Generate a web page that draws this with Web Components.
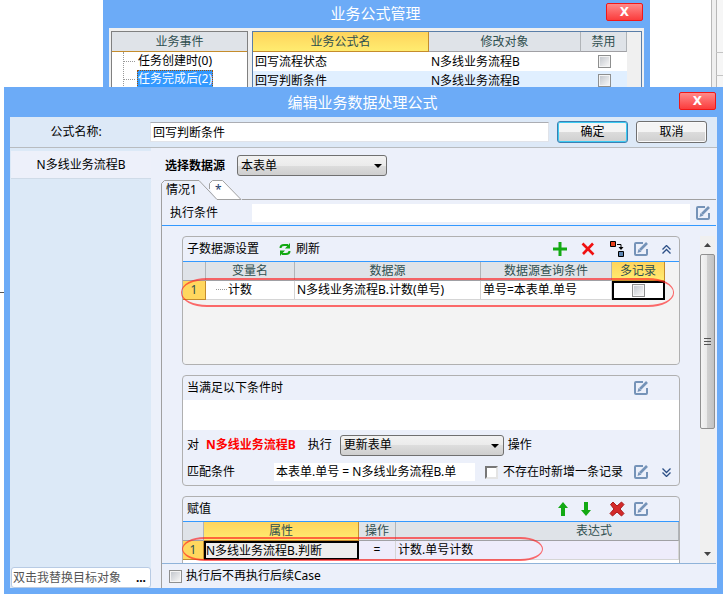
<!DOCTYPE html>
<html lang="zh-CN">
<head>
<meta charset="utf-8">
<title>编辑业务数据处理公式</title>
<style>
  html, body { height: 100%; }
  body {
    margin: 0;
    background: #fff;
    color: #000;
    font: 12px/18px "Noto Sans", "Noto Sans CJK SC", sans-serif;
    overflow: hidden;
  }
</style>
</head>
<body>
<desk-top></desk-top>
<script>
const BASE = `
<style>
  * { box-sizing: border-box; }
  :host([hidden]) { display: none; }
  button, input, select { font: inherit; color: inherit; margin: 0; }
  button { cursor: pointer; }
  .icon {
    display: inline-flex;
    border: 0;
    padding: 0;
    background: none;
    color: #7593b8;
  }
  .push {
    width: 71px;
    height: 22px;
    padding: 0;
    border: 1px solid #707070;
    border-radius: 3px;
    background: linear-gradient(#f4f4f4 50%, #dcdcdc 50%, #cfcfcf);
    box-shadow: inset 0 0 0 1px #fafafa;
  }
  .push.default { border-color: #3c7fb1; box-shadow: inset 0 0 0 1px #3ccbf2; }
  .check {
    appearance: none;
    flex: none;
    display: block;
    width: 13px;
    height: 13px;
    border: 1px solid #8e8f8f;
    background: linear-gradient(135deg, #c4c8ce, #f6f6f6) center / 9px 9px no-repeat #f4f4f4;
  }
  .check.flat { background: #fff; border: 2px solid; border-color: #777 #e4e4e4 #e4e4e4 #777; }
  .select { position: relative; display: block; height: 21px; }
  .select select {
    appearance: none;
    display: block;
    width: 100%;
    height: 100%;
    padding: 0 20px 0 3px;
    border: 1px solid #707070;
    border-radius: 3px;
    background: linear-gradient(#f2f2f2, #ebebeb 50%, #dddddd 50%, #cfcfcf);
    line-height: 18px;
  }
  .select::after {
    content: "";
    position: absolute;
    right: 5px;
    top: 9px;
    border: 4px solid transparent;
    border-top-color: #000;
    border-bottom: 0;
    pointer-events: none;
  }
  table { border-collapse: separate; border-spacing: 0; table-layout: fixed; width: 100%; }
  th, td { height: 19px; padding: 0 2px; line-height: 18px; white-space: nowrap; overflow: hidden; }
  th {
    background: #dfe3e8;
    border-right: 1px solid #b0b4b8;
    border-bottom: 1px solid #a0a0a4;
    color: #2f4f4f;
    font-weight: normal;
  }
  th.on {
    background: linear-gradient(#ffd45c, #ffec70);
    border-right-color: #c58c2c;
    border-bottom-color: #c58c2c;
  }
  td { background: #fff; border-right: 1px solid #d5d5d5; border-bottom: 1px solid #d5d5d5; text-align: left; }
  td .check { margin: 0 auto; }
</style>
`

const ICONS = {
  edit: '<svg width="16" height="16" viewBox="0 0 16 16" fill="none" stroke="currentColor" stroke-width="2"><path d="M10 2H3Q2 2 2 3V13Q2 14 3 14H13Q14 14 14 13V8"/><path d="M7 9L14 2" stroke-width="2.600"/><path d="M4.500 12L5.500 8L8.500 10.500Z" fill="currentColor" stroke="none"/></svg>',
  plus: '<svg width="14" height="14" viewBox="0 0 14 14"><path d="M5.500 0h3v5.500H14v3H8.500V14h-3V8.500H0v-3h5.500z" fill="#13a913"/></svg>',
  cross: '<svg width="14" height="14" viewBox="0 0 14 14" stroke="#f01010" stroke-width="2.600"><path d="M1.500 1.500L12.500 12.500M12 1.500L2 12"/></svg>',
  remove: '<svg width="16" height="16" viewBox="0 0 16 16"><path d="M1.500 3.500L4 1L8 5L12.500 1L15 3.500L11 8L15 12.500L12.500 15L8 11L3.500 15L1 12.500L5 8Z" fill="#d42a2a" stroke="#a81c1c"/></svg>',
  link: '<svg width="16" height="16" viewBox="0 0 16 16"><path d="M1.500 .5h5v5h-5z" fill="#e8401c" stroke="#000"/><path d="M9.500 10.500h5v5h-5z" fill="#5c84b0" stroke="#000"/><path d="M8 3.500h4v4" fill="none" stroke="#000"/><path d="M9.500 6h5L12 9z"/></svg>',
  up: '<svg width="10" height="14" viewBox="0 0 10 14"><path d="M5 0L10 6H7V14H3V6H0z" fill="#13a913"/></svg>',
  down: '<svg width="10" height="14" viewBox="0 0 10 14"><path d="M5 14L10 8H7V0H3V8H0z" fill="#13a913"/></svg>',
  fold: '<svg width="9" height="9" viewBox="0 0 9 9" fill="none" stroke="#2c4f86" stroke-width="1.300"><path d="M.5 4.500l4-4l4 4M.5 8.500l4-4l4 4"/></svg>',
  unfold: '<svg width="9" height="9" viewBox="0 0 9 9" fill="none" stroke="#2c4f86" stroke-width="1.300"><path d="M.5 .5l4 4l4-4M.5 4.500l4 4l4-4"/></svg>',
  refresh: '<svg width="12" height="13" viewBox="0 0 12 13"><g fill="none" stroke="#13a913" stroke-width="2"><path d="M1.500 5Q1.500 2 5 2H9"/><path d="M10.500 8Q10.500 11 7 11H3"/></g><path d="M11 0V5.500H6zM1 13V7.500H6z" fill="#13a913"/></svg>',
}

class DeskTop extends HTMLElement {
  constructor() {
    super()
    this.attachShadow({ mode: 'open' }).innerHTML = `
      <style>
        :host { display: block; position: relative; height: 100%; }
        /* edges of the form that lies under both windows */
        .form {
          position: absolute;
          top: 0; right: 0; bottom: 0;
          width: 11px;
          border-left: 1px solid #b8b8b8;
          background: linear-gradient(#c4c4c4, #c4c4c4) 4px 52px / 7px 1px no-repeat,
            linear-gradient(#c4c4c4, #c4c4c4) 4px 75px / 7px 1px no-repeat,
            linear-gradient(90deg, #efefef 4px, #b8b8b8 4px 5px, #f6f6f6 5px);
        }
        .rule { position: absolute; left: 0; top: 292px; width: 4px; height: 1px; background: #555; }
        formula-manager { position: absolute; left: 103px; right: 73px; top: -2px; height: 110px; }
        formula-editor { position: absolute; left: 4px; right: 0; top: 87px; bottom: 0; }
      </style>
      <div class="form"></div>
      <div class="rule"></div>
      <formula-manager></formula-manager>
      <formula-editor></formula-editor>
    `
  }
}

class AppWindow extends HTMLElement {
  constructor() {
    super()
    this.attachShadow({ mode: 'open' }).innerHTML = `
      ${BASE}
      <style>
        :host {
          display: flex;
          flex-direction: column;
          height: 100%;
          padding: 0 6px 6px;
          background: #6cabf7;
        }
        header { flex: none; display: flex; align-items: flex-start; height: 30px; padding-right: 1px; }
        h1 {
          flex: 1;
          margin: 0;
          padding-left: 36px;
          color: #fff;
          font-size: 15px;
          font-weight: normal;
          line-height: 30px;
          text-align: center;
        }
        .close {
          width: 37px;
          height: 18px;
          margin-top: 5px;
          padding: 0;
          border: 1px solid #f01818;
          border-radius: 2px;
          background: linear-gradient(#ff8a8a, #fb3c3c);
          color: #fff;
          font: bold 12px/16px "DejaVu Sans", sans-serif;
        }
        main { flex: 1; min-height: 0; display: flex; flex-direction: column; }
      </style>
      <header><h1></h1><button class="close" type="button">X</button></header>
      <main><slot></slot></main>
    `
  }

  connectedCallback() {
    this.shadowRoot.querySelector('h1').textContent = this.getAttribute('caption')
  }
}

class FormulaManager extends HTMLElement {
  constructor() {
    super()
    this.attachShadow({ mode: 'open' }).innerHTML = `
      ${BASE}
      <style>
        :host { display: block; }
        .panes { flex: 1; display: flex; gap: 4px; padding: 3px 2px 0; background: #f0f0f0; }
        .events { width: 137px; border: 1px solid #808080; background: #fff; }
        .events h2 {
          margin: 0;
          height: 20px;
          border-bottom: 1px solid #c58c2c;
          background: #dfe3e8;
          color: #2f4f4f;
          font-size: 12px;
          font-weight: normal;
          line-height: 20px;
          text-align: center;
        }
        ul { margin: 0 0 0 11px; padding: 0; list-style: none; border-left: 1px dotted #999; }
        li { display: flex; align-items: center; height: 18px; }
        li::before { content: ""; width: 11px; margin-right: 2px; border-top: 1px dotted #999; }
        li span { padding: 0 1px; line-height: 18px; }
        li.on span { background: #3399ff; color: #fff; outline: 1px dotted #a05000; outline-offset: -1px; }
        .list { flex: 1; border: 1px solid #5a7ea8; padding-right: 14px; }
        th { height: 20px; }
        td { border: 0; }
        .alt td { background: #e0efff; }
      </style>
      <app-window caption="业务公式管理">
        <div class="panes">
          <div class="events">
            <h2>业务事件</h2>
            <ul>
              <li><span>任务创建时(0)</span></li>
              <li class="on"><span>任务完成后(2)</span></li>
            </ul>
          </div>
          <div class="list">
            <table>
              <colgroup><col><col style="width: 152px"><col style="width: 46px"></colgroup>
              <tr><th class="on">业务公式名</th><th>修改对象</th><th>禁用</th></tr>
              <tr><td>回写流程状态</td><td>N多线业务流程B</td><td><input class="check" type="checkbox" aria-label="禁用"></td></tr>
              <tr class="alt"><td>回写判断条件</td><td>N多线业务流程B</td><td><input class="check" type="checkbox" aria-label="禁用"></td></tr>
            </table>
          </div>
        </div>
      </app-window>
    `
  }
}

class GroupBox extends HTMLElement {
  constructor() {
    super()
    this.attachShadow({ mode: 'open' }).innerHTML = `
      <style>
        :host {
          display: block;
          flex: none;
          border: 1px solid #b0b0b0;
          border-radius: 4px;
          background: #ecf0fa;
        }
        header { display: flex; align-items: center; height: 24px; padding: 0 4px; }
        :host([ruled]) header { border-bottom: 1px solid #3399ff; }
        .tools { margin-left: auto; display: flex; align-items: center; }
      </style>
      <header><slot name="head"></slot><div class="tools"><slot name="tools"></slot></div></header>
      <slot></slot>
    `
  }
}

class ScrollBar extends HTMLElement {
  constructor() {
    super()
    this.attachShadow({ mode: 'open' }).innerHTML = `
      ${BASE}
      <style>
        :host { display: flex; flex-direction: column; width: 15px; background: #f0f0f0; }
        button { flex: none; height: 18px; padding: 0; border: 0; background: none; line-height: 0; }
        .track { flex: 1; }
        .thumb {
          display: flex;
          flex-direction: column;
          align-items: center;
          justify-content: center;
          gap: 2px;
          height: 60%;
          border: 1px solid #909090;
          border-radius: 2px;
          background: linear-gradient(90deg, #f4f4f4, #e8e8e8 50%, #d0d0d0 50%, #c2c2c2);
        }
        .thumb i { width: 7px; height: 1px; background: #555; }
      </style>
      <button type="button" aria-label="向上"><svg width="7" height="4" viewBox="0 0 7 4"><path d="M0 4L3.500 0L7 4z" fill="#444"/></svg></button>
      <div class="track"><div class="thumb"><i></i><i></i><i></i></div></div>
      <button type="button" aria-label="向下"><svg width="7" height="4" viewBox="0 0 7 4"><path d="M0 0L3.500 4L7 0z" fill="#444"/></svg></button>
    `
  }
}

class FormulaEditor extends HTMLElement {
  constructor() {
    super()
    this.attachShadow({ mode: 'open' }).innerHTML = `
      ${BASE}
      <style>
        :host { display: block; }
        .top {
          flex: none;
          display: flex;
          align-items: center;
          gap: 8px;
          height: 31px;
          padding-right: 10px;
          border-bottom: 1px solid #b8bcc0;
          background: #dde9f7;
        }
        .top label { width: 132px; text-align: center; }
        .top input { flex: 1; min-width: 0; height: 20px; padding: 0 2px; border: 1px solid #e0e3e9; border-top-color: #abadb3; background: #fff; }
        .body { flex: 1; min-height: 0; display: flex; padding-right: 1px; background: #ecf0fa; }
        nav { flex: none; display: flex; flex-direction: column; width: 141px; padding: 3px 0 0 1px; background: #dce9f7; }
        nav a {
          height: 28px;
          border-bottom: 1px solid #cfdbe8;
          background: #edf0fa;
          color: #000;
          line-height: 27px;
          text-align: center;
          text-decoration: none;
        }
        .target { display: flex; height: 21px; margin-top: auto; border: 1px solid #b8cbe4; border-radius: 3px; background: #fff; color: #555; }
        .target input { flex: 1; min-width: 0; padding: 0 1px; border: 0; background: none; color: #555; }
        .target input::placeholder { color: #555; opacity: 1; }
        .target button { padding: 0 4px; border: 0; background: none; color: #000; font-weight: bold; line-height: 16px; }
        .main { flex: 1; min-width: 0; display: flex; flex-direction: column; padding: 7px 0 0 10px; }
        .source { flex: none; display: flex; align-items: center; gap: 12px; padding-left: 4px; font-weight: bold; }
        .source .select { width: 150px; font-weight: normal; }
        .tabs { flex: none; display: flex; height: 20px; margin-top: 4px; }
        .tabs button { position: relative; height: 20px; padding: 0; border: 0; background: none; text-align: left; }
        .tabs svg { position: absolute; left: 0; top: 0; }
        .tabs span { position: relative; padding-left: 5px; line-height: 20px; }
        .tabs .one { width: 47px; z-index: 1; }
        .tabs .new { width: 34px; }
        .tabs .new span { padding-left: 7px; color: #1c3c6c; }
        .tabs i { flex: 1; border-bottom: 1px solid #a0a0a0; }
        .page { flex: 1; min-height: 0; display: flex; flex-direction: column; border-left: 1px solid #a0a0a0; }
        .when { flex: none; display: flex; align-items: center; height: 26px; padding: 0 5px 0 8px; border-bottom: 1px solid #3399ff; }
        .when label { width: 82px; }
        .when input { flex: 1; min-width: 0; height: 18px; margin-right: 5px; border: 0; background: #fff; }
        .scroll { flex: 1; min-height: 0; display: flex; padding: 10px 1px 0 20px; }
        .groups { flex: 1; min-width: 0; display: flex; flex-direction: column; gap: 10px; margin-right: 20px; clip-path: inset(0 -8px 0 -8px); }
        .refresh { display: flex; align-items: center; gap: 5px; margin-left: 20px; padding: 0; border: 0; background: none; }
        .grid { position: relative; }
        /* hand-drawn rings round the active rows */
        .ring {
          position: absolute;
          border: 2px solid rgba(255, 30, 30, .65);
          border-left-width: 1px;
          border-right-width: 1px;
          border-radius: 26px / 14px;
          pointer-events: none;
        }
        .fill { height: 102px; padding-right: 14px; background: #f3f3f3; border-radius: 0 0 4px 4px; }
        .num { background: #ffd75e; border-color: #c58c2c; color: #2f4f4f; text-align: center; }
        .cell { border: 2px solid #000; line-height: 15px; }
        .branch::before { content: ""; display: inline-block; width: 11px; margin: 0 1px 4px 8px; border-top: 1px dotted #999; }
        .area { display: block; width: 100%; height: 30px; padding: 0; border: 0; background: #fff; resize: none; }
        .row { display: flex; align-items: center; height: 30px; padding: 0 4px; }
        .row.match { height: 24px; margin-bottom: 1px; }
        .row strong { margin: 0 12px 0 7px; color: #f00; }
        .row .select { width: 164px; margin: 0 4px 0 8px; }
        .match label:first-child { width: 87px; }
        .match .expr { flex: 1; min-width: 0; height: 18px; margin-right: 10px; padding: 0 2px; border: 0; background: #fff; }
        .match .check { margin-right: 5px; }
        .match .edit { margin-left: 10px; }
        .match .more { margin: 0 4px 0 13px; }
        .assign td { background: #eeecfb; }
        .assign td.num { background: #ffd75e; }
        .assign td.cell { background: #ededed; padding: 0; }
        .rest { height: 40px; background: #fff; }
        .foot { flex: none; display: flex; align-items: center; gap: 4px; height: 25px; padding-left: 7px; border-top: 1px solid #8fb3d9; }
      </style>
      <app-window caption="编辑业务数据处理公式">
        <div class="top">
          <label for="name">公式名称:</label>
          <input id="name" value="回写判断条件">
          <button class="push default" type="button">确定</button>
          <button class="push" type="button">取消</button>
        </div>
        <div class="body">
          <nav>
            <a href="#flow">N多线业务流程B</a>
            <div class="target"><input aria-label="目标对象" placeholder="双击我替换目标对象"><button type="button">...</button></div>
          </nav>
          <div class="main">
            <div class="source">
              <label for="source">选择数据源</label>
              <span class="select"><select id="source"><option>本表单</option></select></span>
            </div>
            <div class="tabs">
              <button class="one" type="button">
                <svg width="57" height="20" viewBox="0 0 57 20"><path d="M.5 20V3.500L3.500 .5H38L56 19.500" fill="#ecf0fa" stroke="#a0a0a0"/></svg>
                <span>情况1</span>
              </button>
              <button class="new" type="button">
                <svg width="34" height="20" viewBox="0 0 34 20"><path d="M1.500 9V3.500L4.500 .5H14.500L33 19.500H9" fill="#fff" stroke="#a0a0a0"/></svg>
                <span>*</span>
              </button>
              <i></i>
            </div>
            <div class="page">
              <div class="when">
                <label for="when">执行条件</label>
                <input id="when">
                <button class="icon" type="button" aria-label="编辑">${ICONS.edit}</button>
              </div>
              <div class="scroll">
                <div class="groups">
                  <group-box ruled>
                    <span slot="head">子数据源设置</span>
                    <button slot="head" class="refresh" type="button">${ICONS.refresh}刷新</button>
                    <button slot="tools" class="icon" type="button" aria-label="添加" style="margin-right: 14px">${ICONS.plus}</button>
                    <button slot="tools" class="icon" type="button" aria-label="删除" style="margin-right: 14px">${ICONS.cross}</button>
                    <button slot="tools" class="icon" type="button" aria-label="关联" style="margin-right: 8px">${ICONS.link}</button>
                    <button slot="tools" class="icon" type="button" aria-label="编辑" style="margin-right: 13px">${ICONS.edit}</button>
                    <button slot="tools" class="icon" type="button" aria-label="收起" style="margin-right: 4px">${ICONS.fold}</button>
                    <div class="grid fill">
                      <table>
                        <colgroup><col style="width: 23px"><col style="width: 89px"><col><col style="width: 131px"><col style="width: 53px"></colgroup>
                        <tr><th></th><th>变量名</th><th>数据源</th><th>数据源查询条件</th><th class="on">多记录</th></tr>
                        <tr><td class="num">1</td><td class="branch">计数</td><td>N多线业务流程B.计数(单号)</td><td>单号=本表单.单号</td><td class="cell"><input class="check" type="checkbox" aria-label="多记录"></td></tr>
                      </table>
                      <div class="ring" style="left: -2px; right: 5px; top: 16px; height: 29px"></div>
                    </div>
                  </group-box>
                  <group-box>
                    <label slot="head" for="cond">当满足以下条件时</label>
                    <button slot="tools" class="icon" type="button" aria-label="编辑" style="margin-right: 26px">${ICONS.edit}</button>
                    <textarea id="cond" class="area"></textarea>
                    <div class="row">
                      <span>对</span><strong>N多线业务流程B</strong><label for="action">执行</label>
                      <span class="select"><select id="action"><option>更新表单</option></select></span>
                      <span>操作</span>
                    </div>
                    <div class="row match">
                      <label for="match">匹配条件</label>
                      <input id="match" class="expr" value="本表单.单号 = N多线业务流程B.单">
                      <input id="add" class="check flat" type="checkbox"><label for="add">不存在时新增一条记录</label>
                      <button class="icon edit" type="button" aria-label="编辑">${ICONS.edit}</button>
                      <button class="icon more" type="button" aria-label="展开">${ICONS.unfold}</button>
                    </div>
                  </group-box>
                  <group-box ruled>
                    <span slot="head">赋值</span>
                    <button slot="tools" class="icon" type="button" aria-label="上移" style="margin-right: 13px">${ICONS.up}</button>
                    <button slot="tools" class="icon" type="button" aria-label="下移" style="margin-right: 18px">${ICONS.down}</button>
                    <button slot="tools" class="icon" type="button" aria-label="清除" style="margin-right: 8px">${ICONS.remove}</button>
                    <button slot="tools" class="icon" type="button" aria-label="编辑" style="margin-right: 26px">${ICONS.edit}</button>
                    <div class="grid assign">
                      <table>
                        <colgroup><col style="width: 21px"><col style="width: 155px"><col style="width: 37px"><col></colgroup>
                        <tr><th></th><th class="on">属性</th><th>操作</th><th style="padding-left: 116px">表达式</th></tr>
                        <tr><td class="num">1</td><td class="cell">N多线业务流程B.判断</td><td style="text-align: center">=</td><td>计数.单号计数</td></tr>
                      </table>
                      <div class="ring" style="left: -1px; right: 136px; top: 15px; height: 24px"></div>
                    </div>
                    <div class="rest"></div>
                  </group-box>
                </div>
                <scroll-bar></scroll-bar>
              </div>
              <div class="foot">
                <input id="stop" class="check" type="checkbox"><label for="stop">执行后不再执行后续Case</label>
              </div>
            </div>
          </div>
        </div>
      </app-window>
    `
  }
}

customElements.define('app-window', AppWindow)
customElements.define('group-box', GroupBox)
customElements.define('scroll-bar', ScrollBar)
customElements.define('formula-manager', FormulaManager)
customElements.define('formula-editor', FormulaEditor)
customElements.define('desk-top', DeskTop)
</script>
</body>
</html>
